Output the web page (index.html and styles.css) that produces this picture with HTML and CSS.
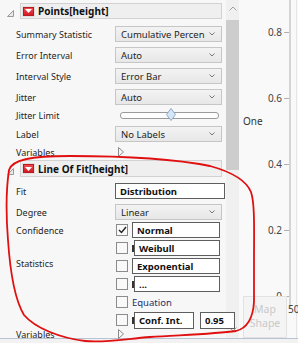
FILE: index.html
```html
<!DOCTYPE html>
<html>
<head>
<meta charset="utf-8">
<link rel="stylesheet" href="styles.css">
</head>
<body>
<div class="app">
  <div class="panel">
    <div class="hdr-row">
      <svg class="disc" width="7" height="7" viewBox="0 0 7 7"><path d="M6.5 0.5 L6.5 6.5 L0.5 6.5 Z" fill="#e8e8e8" stroke="#9a9a9a" stroke-width="1"/></svg>
      <div class="hdr">
        <span class="menu"><svg width="7" height="4" viewBox="0 0 7 4"><path d="M0 0 L7 0 L3.5 4 Z" fill="#fff"/></svg></span>
        <span class="title">Points[height]</span>
      </div>
    </div>
    <div class="props pts">
      <div class="lbl">Summary Statistic</div>
      <div class="dd"><span>Cumulative Percen</span><svg class="chev" width="6" height="4" viewBox="0 0 6 4"><path d="M0.5 0.5 L3 3 L5.5 0.5" fill="none" stroke="#777" stroke-width="1"/></svg></div>
      <div class="lbl">Error Interval</div>
      <div class="dd"><span>Auto</span><svg class="chev" width="6" height="4" viewBox="0 0 6 4"><path d="M0.5 0.5 L3 3 L5.5 0.5" fill="none" stroke="#777" stroke-width="1"/></svg></div>
      <div class="lbl">Interval Style</div>
      <div class="dd"><span>Error Bar</span><svg class="chev" width="6" height="4" viewBox="0 0 6 4"><path d="M0.5 0.5 L3 3 L5.5 0.5" fill="none" stroke="#777" stroke-width="1"/></svg></div>
      <div class="lbl">Jitter</div>
      <div class="dd"><span>Auto</span><svg class="chev" width="6" height="4" viewBox="0 0 6 4"><path d="M0.5 0.5 L3 3 L5.5 0.5" fill="none" stroke="#777" stroke-width="1"/></svg></div>
      <div class="lbl">Jitter Limit</div>
      <div class="slider-cell"><div class="track"><svg class="thumb" width="10" height="13" viewBox="0 0 10 13"><path d="M5 0.5 L9.5 6.5 L5 12.5 L0.5 6.5 Z" fill="#d6e6f5" stroke="#8aa8c8" stroke-width="1"/></svg></div></div>
      <div class="lbl">Label</div>
      <div class="dd"><span>No Labels</span><svg class="chev" width="6" height="4" viewBox="0 0 6 4"><path d="M0.5 0.5 L3 3 L5.5 0.5" fill="none" stroke="#777" stroke-width="1"/></svg></div>
      <div class="lbl">Variables</div>
      <div class="var-cell"><svg width="6" height="10" viewBox="0 0 6 10"><path d="M0.5 0.5 L5.5 5 L0.5 9.5 Z" fill="none" stroke="#8a8a8a" stroke-width="1"/></svg></div>
    </div>

    <div class="hdr-row lof">
      <svg class="disc" width="7" height="7" viewBox="0 0 7 7"><path d="M6.5 0.5 L6.5 6.5 L0.5 6.5 Z" fill="#e8e8e8" stroke="#9a9a9a" stroke-width="1"/></svg>
      <div class="hdr tall">
        <span class="menu"><svg width="7" height="4" viewBox="0 0 7 4"><path d="M0 0 L7 0 L3.5 4 Z" fill="#fff"/></svg></span>
        <span class="title">Line Of Fit[height]</span>
      </div>
    </div>
    <div class="props fit">
      <div class="lbl">Fit</div>
      <div class="tb wide">Distribution</div>
      <div class="lbl">Degree</div>
      <div class="dd"><span>Linear</span><svg class="chev" width="6" height="4" viewBox="0 0 6 4"><path d="M0.5 0.5 L3 3 L5.5 0.5" fill="none" stroke="#777" stroke-width="1"/></svg></div>
    </div>
    <div class="conf">
      <div class="lbl r1">Confidence</div>
      <div class="lbl r3">Statistics</div>
      <div class="crow c1"><span class="cb on"><svg width="9" height="8" viewBox="0 0 9 8"><path d="M1 4 L3.5 6.5 L8 1" fill="none" stroke="#222" stroke-width="1.4"/></svg></span><span class="tb cbox">Normal</span></div>
      <div class="crow c2"><span class="cb"></span><span class="mark"></span><span class="tb cbox sh">Weibull</span></div>
      <div class="crow c3"><span class="cb"></span><span class="tb cbox">Exponential</span></div>
      <div class="crow c4"><span class="cb"></span><span class="mark"></span><span class="tb cbox sh">...</span></div>
      <div class="crow c5"><span class="cb"></span><span class="eq">Equation</span></div>
      <div class="crow c6"><span class="cb"></span><span class="mark"></span><span class="tb ci">Conf. Int.</span><span class="tb num">0.95</span></div>
      <div class="lbl r7">Variables</div>
      <div class="var-cell r7b"><svg width="6" height="10" viewBox="0 0 6 10"><path d="M0.5 0.5 L5.5 5 L0.5 9.5 Z" fill="none" stroke="#8a8a8a" stroke-width="1"/></svg></div>
    </div>
  </div>

  <div class="scroll">
    <svg class="sarrow" width="8" height="5" viewBox="0 0 8 5"><path d="M0.5 4.5 L4 1 L7.5 4.5" fill="none" stroke="#a0a0a0" stroke-width="1"/></svg>
    <div class="thumbbar"></div>
    <div class="sfill"></div>
    <svg class="sarrow" width="8" height="5" viewBox="0 0 8 5"><path d="M0.5 0.5 L4 4 L7.5 0.5" fill="none" stroke="#a0a0a0" stroke-width="1"/></svg>
  </div>

  <div class="graph">
    <div class="axis">
      <div class="tick"><span>0.8</span><i></i></div>
      <div class="tick"><span>0.6</span><i></i></div>
      <div class="tick"><span>0.4</span><i></i></div>
      <div class="tick"><span>0.2</span><i></i></div>
      <div class="tick"><span>0</span><i></i></div>
    </div>
    <div class="vline"></div>
    <div class="vline2"></div>
    <div class="one">One</div>
    <div class="xlab">50</div>
    <div class="mapshape">Map<br>Shape</div>
  </div>

  <svg class="annot" width="298" height="343" viewBox="0 0 298 343">
    <path d="M9 170 C 12 160, 30 156, 70 156 C 120 156, 175 159, 210 166 C 232 172, 246 180, 251 192 C 255 204, 254 230, 254 260 L 254 302 C 253 318, 248 328, 236 331 C 215 334, 180 335, 150 337 C 125 339, 105 343, 85 341 C 60 338, 35 328, 24 315 C 15 300, 10 270, 8 240 C 6 215, 6 190, 9 170" fill="none" stroke="#e01010" stroke-width="1.8"/>
  </svg>
</div>
</body>
</html>
```
FILE: styles.css
```css
html, body {
  margin: 0;
  padding: 0;
  background: #f2f2f2;
}
body {
  width: 298px;
  height: 343px;
  overflow: hidden;
  font-family: "Noto Sans", "Open Sans", sans-serif;
  font-size: 9px;
  color: #1e1e1e;
}
.app {
  position: relative;
  display: flex;
  height: 338px;
  border-bottom: 1px solid #b8c3d4;
  background: #f7f7f7;
}
.panel {
  width: 226px;
  flex: none;
  padding-top: 3px;
  box-sizing: border-box;
  position: relative;
  z-index: 2;
}
.hdr-row {
  display: flex;
  align-items: center;
  height: 16px;
}
.hdr-row.lof {
  height: 17px;
  margin-top: 3px;
}
.disc {
  margin-left: 7px;
  margin-top: 5px;
  width: 7px;
  height: 7px;
}
.hdr {
  margin-left: 6px;
  width: 202px;
  height: 16px;
  box-sizing: border-box;
  background: #efefef;
  border: 1px solid #d2d2d2;
  display: flex;
  align-items: center;
}
.hdr.tall {
  height: 17px;
}
.menu {
  margin-left: 2px;
  width: 11px;
  height: 9px;
  box-sizing: border-box;
  background: linear-gradient(#f04a50, #d01c24);
  border: 1px solid #b91a20;
  outline: 1px solid #e0e0e0;
  display: flex;
  align-items: center;
  justify-content: center;
}
.menu svg {
  display: block;
}
.title {
  margin-left: 4px;
  font-weight: bold;
  font-size: 10px;
  color: #111;
}
.props {
  display: grid;
  grid-template-columns: 99px 107px;
  padding-left: 16px;
  row-gap: 5px;
}
.props.pts {
  margin-top: 7px;
  grid-template-rows: 16px 16px 16px 16px 11px 16px 10px;
}
.props.fit {
  margin-top: 6px;
  grid-template-rows: 16px 16px;
}
.lbl {
  display: flex;
  align-items: center;
  white-space: nowrap;
}
.dd {
  height: 16px;
  box-sizing: border-box;
  border: 1px solid #c6c6c6;
  background: linear-gradient(#f3f3f3, #e7e7e7);
  display: flex;
  align-items: center;
  justify-content: space-between;
  padding: 0 6px 0 5px;
  font-size: 9.5px;
  color: #1e1e1e;
}
.chev {
  display: block;
}
.slider-cell {
  display: flex;
  align-items: center;
}
.track {
  position: relative;
  margin-left: 5px;
  width: 97px;
  height: 5px;
  border: 1px solid #9a9a9a;
  border-radius: 3px;
  background: #fdfdfd;
}
.thumb {
  position: absolute;
  left: 45px;
  top: -5px;
}
.var-cell {
  display: flex;
  align-items: center;
  padding-left: 3px;
}
.tb {
  box-sizing: border-box;
  height: 16px;
  background: #fff;
  border: 1px solid #5e5e5e;
  font-weight: bold;
  font-size: 9.5px;
  display: flex;
  align-items: center;
  padding-left: 4px;
  color: #111;
}
.tb.wide {
  width: 110px;
}
.conf {
  display: grid;
  grid-template-columns: 99px 120px;
  grid-template-rows: repeat(6, 18px) 10px;
  padding-left: 16px;
  margin-top: 1px;
  position: relative;
}
.lbl.r1 { grid-column: 1; grid-row: 1; }
.lbl.r3 { grid-column: 1; grid-row: 3; margin-top: -6px; }
.lbl.r7 { grid-column: 1; grid-row: 7; }
.var-cell.r7b { grid-column: 2; grid-row: 7; }
.crow {
  grid-column: 2;
  display: flex;
  align-items: center;
  position: relative;
}
.c1 { grid-row: 1; }
.c2 { grid-row: 2; }
.c3 { grid-row: 3; }
.c4 { grid-row: 4; }
.c5 { grid-row: 5; }
.c6 { grid-row: 6; }
.cb {
  width: 12px;
  height: 12px;
  box-sizing: border-box;
  border: 1px solid #8c8c8c;
  background: #f9f9f9;
  margin-left: 1px;
  flex: none;
  display: flex;
  align-items: center;
  justify-content: center;
}
.cb svg { display: block; }
.mark {
  position: absolute;
  left: 17px;
  width: 2px;
  height: 7px;
  background: #333;
}
.cbox {
  margin-left: 4px;
  width: 88px;
}
.cbox.sh {
  margin-left: 6px;
  width: 86px;
}
.eq {
  margin-left: 4px;
  color: #1c2f6a;
  font-size: 9.5px;
}
.c6 .ci {
  margin-left: 6px;
  width: 60px;
  height: 17px;
}
.c6 .num {
  margin-left: 6px;
  width: 35px;
  height: 17px;
}
.scroll {
  width: 13px;
  flex: none;
  background: #f0f0f0;
  display: flex;
  flex-direction: column;
  align-items: center;
  position: relative;
  z-index: 1;
}
.sarrow {
  display: block;
  margin: 6px 0;
}
.thumbbar {
  width: 13px;
  height: 150px;
  margin-top: 3px;
  background: #cdcdcd;
}
.sfill {
  flex: 1;
}
.graph {
  position: relative;
  flex: 1;
  background: #f9f9f9;
}
.axis {
  position: absolute;
  right: 8px;
  top: 25px;
  display: flex;
  flex-direction: column;
  align-items: flex-end;
  gap: 52px;
}
.tick {
  height: 14px;
  display: flex;
  align-items: center;
  gap: 2px;
  font-size: 10px;
  color: #444;
}
.tick i {
  display: block;
  width: 6px;
  height: 1px;
  background: #b0b0b0;
}
.vline {
  position: absolute;
  left: 50px;
  top: 0;
  bottom: 30px;
  width: 2px;
  background: #d4d4d4;
}
.vline2 {
  position: absolute;
  left: 57px;
  top: 0;
  bottom: 0;
  width: 1px;
  background: #e6e6e6;
}
.one {
  position: absolute;
  left: 4px;
  top: 114px;
  font-size: 10px;
  color: #333;
}
.xlab {
  position: absolute;
  left: 49px;
  top: 302px;
  font-size: 10px;
  color: #444;
}
.mapshape {
  position: absolute;
  left: 4px;
  top: 296px;
  width: 44px;
  height: 42px;
  box-sizing: border-box;
  border: 1px solid #e2e2e2;
  background: #f4f4f4;
  color: #c9c9c9;
  font-size: 10.5px;
  line-height: 14px;
  text-align: center;
  padding-top: 5px;
}
.annot {
  position: absolute;
  left: 0;
  top: 0;
  z-index: 5;
  pointer-events: none;
}
```
